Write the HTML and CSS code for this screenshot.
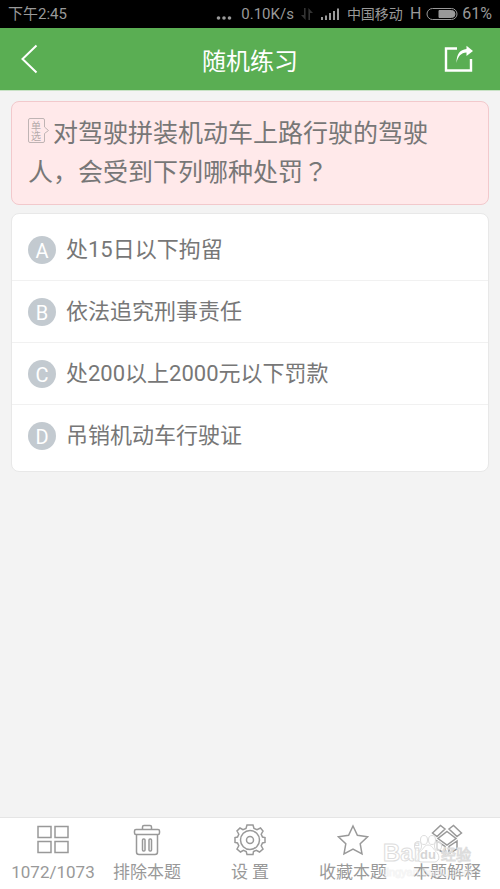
FILE: index.html
```
<!DOCTYPE html>
<html lang="zh-CN">
<head>
  <meta charset="UTF-8">
  <meta name="viewport" content="width=device-width, initial-scale=1">
  <title>随机练习</title>
  <link rel="stylesheet" href="styles.css">
</head>
<body>
  <!-- Status bar -->
  <div class="status-bar">
    <span class="time">下午2:45</span>
    <svg class="dots" width="16" height="16" viewBox="0 0 16 16">
      <circle cx="2.5" cy="12" r="1.8"/><circle cx="8" cy="12" r="1.8"/><circle cx="13.5" cy="12" r="1.8"/>
    </svg>
    <span class="speed">0.10K/s</span>
    <svg class="arrows" width="12" height="14" viewBox="0 0 12 14">
      <path d="M0 8h3V1h1.600v12zM7.400 13V1L12 6H9v7z"/>
    </svg>
    <svg class="signal" width="18" height="14" viewBox="0 0 18 14">
      <path d="M0 10h2v3H0zM4 8.500h2V13H4zM8 6h2v7H8zM12 4h2v9h-2zM16 1.500h2V13h-2z"/>
    </svg>
    <span class="carrier">中国移动</span>
    <span class="network">H</span>
    <svg class="battery" width="32" height="14" viewBox="0 0 32 14">
      <rect x="1" y="1.500" width="30" height="11" rx="5.500" fill="none" stroke="#999"/>
      <path d="M13 3.500h12.500a3.500 3.500 0 0 1 0 7H13z" stroke="#999"/>
    </svg>
    <span class="percent">61%</span>
  </div>

  <header>
    <button class="icon-btn" type="button" aria-label="返回">
      <svg width="18" height="30" viewBox="0 0 18 30">
        <path d="M16.500 1.500 2.500 15l14 13.500" fill="none" stroke="#fff" stroke-width="2"/>
      </svg>
    </button>
    <h1>随机练习</h1>
    <button class="icon-btn" type="button" aria-label="分享">
      <svg width="30" height="28" viewBox="0 0 30 28">
        <path d="M13 3.500H2V25.500h25V14" fill="none" stroke="#fff" stroke-width="2.400"/>
        <path d="M12.500 18C12.500 9 16 4.500 22.500 4V.800L29 6l-6.500 5V7.500C17 8 14 11 12.500 18z" fill="#fff"/>
      </svg>
    </button>
  </header>

  <main>
    <!-- Question -->
    <div class="question">
      <svg class="tag" width="21" height="26" viewBox="0 0 21 26" aria-label="单选">
        <path d="M2 .5h13A1.500 1.500 0 0 1 16.500 2v7l4 3.500-4 3V23a1.500 1.500 0 0 1-1.500 1.500H2A1.500 1.500 0 0 1 .5 23V2A1.500 1.500 0 0 1 2 .5z"/>
        <text x="3" y="12">单</text>
        <text x="3" y="22">选</text>
      </svg>
      <p>对驾驶拼装机动车上路行驶的驾驶人，会受到下列哪种处罚<span class="punct" lang="zh-TW">？</span></p>
    </div>

    <!-- Answers -->
    <ul class="answers">
      <li><button type="button"><span class="letter">A</span><span class="text">处15日以下拘留</span></button></li>
      <li><button type="button"><span class="letter">B</span><span class="text">依法追究刑事责任</span></button></li>
      <li><button type="button"><span class="letter">C</span><span class="text">处200以上2000元以下罚款</span></button></li>
      <li><button type="button"><span class="letter">D</span><span class="text">吊销机动车行驶证</span></button></li>
    </ul>
  </main>

  <!-- Bottom toolbar -->
  <footer>
    <button type="button">
      <svg width="32" height="32" viewBox="0 0 32 32">
        <path d="M1 2.500h13v11H1zM18 2.500h13v11H18zM1 17.500h13v11H1zM18 17.500h13v11H18z"/>
      </svg>
      <span>1072/1073</span>
    </button>
    <button type="button">
      <svg width="32" height="32" viewBox="0 0 32 32">
        <path d="M11.500 5.500V3A1.500 1.500 0 0 1 13 1.500h6A1.500 1.500 0 0 1 20.500 3v2.500"/>
        <rect x="3.500" y="5.500" width="25" height="5" rx="1.500"/>
        <path d="M5.500 10.500V28a2.500 2.500 0 0 0 2.500 2.500h16a2.500 2.500 0 0 0 2.500-2.500V10.500"/>
        <rect x="11.500" y="15" width="2.500" height="12" rx="1"/>
        <rect x="18" y="15" width="2.500" height="12" rx="1"/>
      </svg>
      <span>排除本题</span>
    </button>
    <button type="button">
      <svg width="32" height="32" viewBox="0 0 32 32">
        <path d="M13 1h6l1 3.500 3 1.200L26.500 4 29 7l-1.800 3.200L28.500 13 31 13.500v5L28.500 19l-1.300 2.800L29 25l-3.500 3-3.200-1.700-2.800 1.200L19 30.500h-6l-.8-3-2.800-1.200L6.500 28 3 25l1.800-3.200L3.500 19 1 18.500v-5L3.500 13l1.300-2.800L3 7l3-3 3 1.700 3-1.200z"/>
        <circle cx="16" cy="16" r="9.500"/>
        <circle cx="16" cy="16" r="3.500"/>
      </svg>
      <span>设 置</span>
    </button>
    <button type="button">
      <svg width="32" height="32" viewBox="0 0 32 32">
        <path d="m16 2 4.400 9.300 10.200 1.400-7.400 7.100 1.800 10.100L16 25l-9 4.900 1.800-10.100-7.400-7.100 10.200-1.400z"/>
      </svg>
      <span>收藏本题</span>
    </button>
    <button type="button">
      <svg width="32" height="32" viewBox="0 0 32 32">
        <path d="M1.500 9 9.500 1.500 14 5 6 12.500zM30.500 9l-8-7.500L18 5l8 7.500zM16 7.500l9 7-9 6.500-9-6.500zM6 17l8 5.500v7L6 25zM26 17l-8 5.500v7l8-4.500z"/>
      </svg>
      <span>本题解释</span>
    </button>

    <div class="watermark">
      <svg width="98" height="46" viewBox="0 0 98 46">
        <g class="logo">
          <ellipse cx="35" cy="11" rx="3.500" ry="4.500"/>
          <ellipse cx="41" cy="5" rx="3.500" ry="4.500"/>
          <ellipse cx="49" cy="5" rx="3.500" ry="4.500"/>
          <ellipse cx="55" cy="11" rx="3.500" ry="4.500"/>
          <path d="M45 10c4 0 5 4 8 6.500s5 9-1 10.500H38c-6-1.500-5-8-1-10.500S41 10 45 10z"/>
          <text class="bai" x="0" y="26">Bai</text>
          <text class="jy" x="58" y="25">经验</text>
        </g>
        <text class="du" x="37" y="24">du</text>
        <text class="url" x="1" y="41">jingyan.baidu.com</text>
      </svg>
    </div>
  </footer>
</body>
</html>
```

FILE: styles.css
```
* {
  margin: 0;
  padding: 0;
  box-sizing: border-box;
}
body {
  display: flex;
  flex-direction: column;
  min-height: 100vh;
  background: #f3f3f3;
  color: #777;
  font-family: Roboto, "Noto Sans CJK SC", sans-serif;
}
button {
  border: none;
  background: none;
  color: inherit;
  font: inherit;
  cursor: pointer;
}
svg {
  display: block;
  flex-shrink: 0;
}

/* Status bar */
.status-bar {
  display: flex;
  align-items: center;
  height: 28px;
  padding: 0 8px;
  background: #000;
  color: #999;
  font-size: 14px;
  line-height: 28px;
  white-space: nowrap;
}
.status-bar svg {
  fill: #999;
}
.time {
  margin-right: auto;
}
.time,
.speed {
  font-size: 15px;
}
.network,
.percent {
  font-size: 16px;
}
.speed {
  margin: 0 7px 0 9px;
}
.status-bar .arrows {
  fill: #333;
}
.signal {
  margin: 0 8px;
}
.network {
  margin: 0 5px 0 7px;
}
.battery {
  margin-right: 4px;
}

/* Title bar */
header {
  display: flex;
  align-items: center;
  justify-content: space-between;
  height: 62px;
  padding: 0 16px;
  background: #5aae53;
  color: #fff;
  box-shadow: 0 1px 0 #c8e2c5;
}
header h1 {
  font-size: 24px;
  font-weight: 400;
}
.icon-btn {
  display: flex;
  align-items: center;
  width: 40px;
  height: 40px;
  padding: 0 4px;
}
.icon-btn:last-child {
  justify-content: flex-end;
  padding-right: 10px;
}

main {
  flex: 1;
  padding: 11px 11px 16px;
}

/* Question */
.question {
  position: relative;
  padding: 12px 40px 12px 16px;
  border: 1px solid #f2c9cc;
  border-radius: 8px;
  background: #ffe9ea;
}
.question p {
  font-size: 25px;
  line-height: 39px;
  text-indent: 25px;
}
.punct {
  font-family: "Noto Sans CJK TC", sans-serif;
  line-height: 1;
}
.tag {
  position: absolute;
  top: 16px;
  left: 16px;
  fill: none;
  stroke: #bfb4b4;
}
.tag text {
  fill: #b5abab;
  stroke: none;
  font-size: 10px;
}

/* Answers */
.answers {
  margin-top: 8px;
  padding: 5px 0;
  border: 1px solid #e8e8e8;
  border-radius: 8px;
  background: #fff;
  list-style: none;
}
.answers li + li {
  border-top: 1px solid #f1f1f1;
}
.answers button {
  display: flex;
  align-items: center;
  gap: 10px;
  width: 100%;
  height: 61px;
  padding: 0 16px;
  font-size: 22px;
  text-align: left;
}
.answers .text {
  padding-bottom: 6px;
}
.letter {
  width: 28px;
  height: 28px;
  border-radius: 50%;
  background: #c3cad0;
  color: #fff;
  font-size: 20px;
  line-height: 30px;
  text-align: center;
}

/* Bottom toolbar */
footer {
  position: relative;
  display: grid;
  grid-template-columns: 106fr 82fr 124fr 82fr 106fr;
  height: 72px;
  border-top: 1px solid #e5e5e5;
  background: #fff;
  color: #999;
}
footer button {
  display: flex;
  flex-direction: column;
  align-items: center;
  gap: 4px;
  padding-top: 6px;
  font-size: 17px;
  line-height: 24px;
  white-space: nowrap;
}
footer button svg {
  fill: none;
  stroke: #999;
  stroke-width: 1.5;
}

/* Watermark */
.watermark {
  position: absolute;
  right: 19px;
  bottom: 8px;
  pointer-events: none;
}
.logo {
  fill: #fff;
  fill-opacity: 0.6;
  stroke: #ddd;
  stroke-width: 1;
}
.bai {
  font: bold 24px "Liberation Sans", sans-serif;
}
.jy {
  font-size: 15px;
}
.url {
  fill: #fff;
  fill-opacity: 0.5;
  stroke: #ddd;
  stroke-opacity: 0.3;
  font: 11px "Liberation Sans", sans-serif;
}
.du {
  fill: #d5d5d5;
  font: bold 13px "Liberation Sans", sans-serif;
}
```
